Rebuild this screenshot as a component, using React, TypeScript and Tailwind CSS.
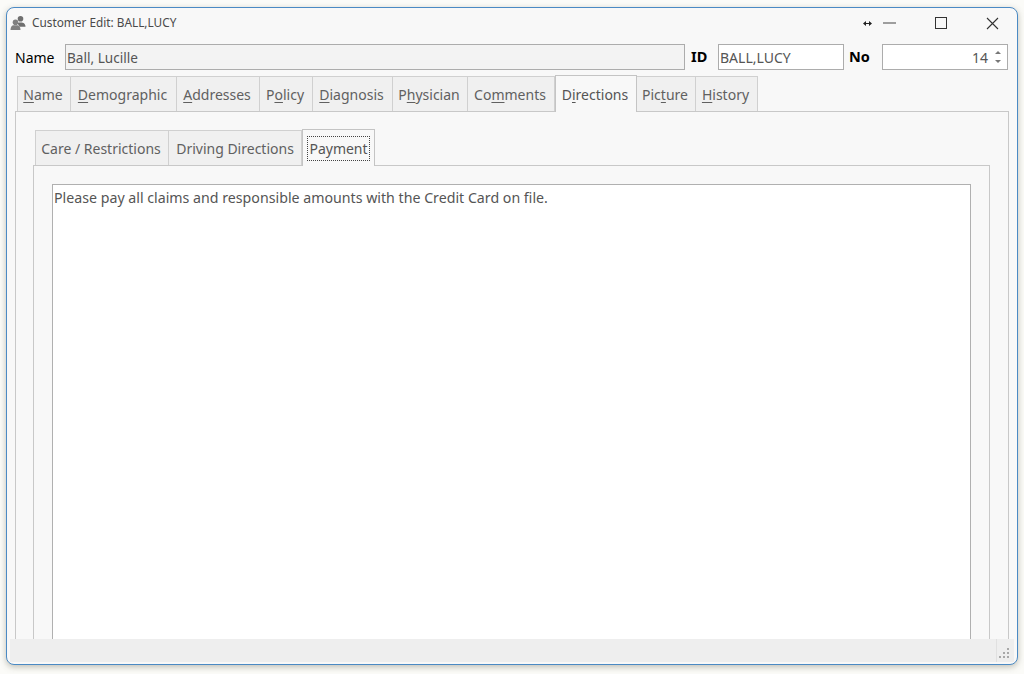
import React from 'react';

interface TabItem {
    before: string;
    mnemonic?: string;
    after?: string;
    width: number;
}

const MAIN_TABS: TabItem[] = [
    {before: '', mnemonic: 'N', after: 'ame', width: 54},
    {before: '', mnemonic: 'D', after: 'emographic', width: 106},
    {before: '', mnemonic: 'A', after: 'ddresses', width: 83},
    {before: 'P', mnemonic: 'o', after: 'licy', width: 53},
    {before: '', mnemonic: 'D', after: 'iagnosis', width: 80},
    {before: 'P', mnemonic: 'h', after: 'ysician', width: 75},
    {before: 'Co', mnemonic: 'm', after: 'ments', width: 87},
    {before: 'D', mnemonic: 'i', after: 'rections', width: 82},
    {before: 'Pic', mnemonic: 't', after: 'ure', width: 59},
    {before: '', mnemonic: 'H', after: 'istory', width: 62},
];

const ACTIVE_MAIN = 7;

function TabLabel({tab}: {tab: TabItem}) {
    return (
        <span>
            {tab.before}
            {tab.mnemonic && <span className="underline underline-offset-2">{tab.mnemonic}</span>}
            {tab.after}
        </span>
    );
}

function PeopleIcon() {
    return (
        <svg width="16" height="16" viewBox="0 0 16 16" fill="#6f6f6f">
            <circle cx="10.5" cy="3.8" r="2.8" />
            <path d="M7 8.5c1-1.2 6-1.2 7.2 0 .9.7 1.3 2 1.3 3.2H9.5c-.3-1.3-1.2-2.4-2.5-3.2z" />
            <circle cx="5.5" cy="7.3" r="2.8" fill="#808080" />
            <path d="M.5 15c0-3 1.4-4.8 3-4.8h4c1.6 0 3 1.8 3 4.8z" fill="#808080" />
        </svg>
    );
}

export default function App() {
    return (
        <div className="w-[1024px] h-[674px] overflow-hidden bg-[#fbfbf8] pl-[6px] pt-[7px] font-['Noto_Sans','Open_Sans',sans-serif]">
            <div className="w-[1012px] h-[658px] flex flex-col overflow-hidden rounded-lg border border-[#4b8ac4] bg-[#f8f8f8] shadow-[0_2px_6px_rgba(80,80,60,0.35)]">
                {/* title bar */}
                <div className="h-[29px] shrink-0 flex items-center pl-[3px] pt-[1px]">
                    <PeopleIcon />
                    <span className="ml-[6px] text-[11.8px] text-[#4a4a4a]">Customer Edit: BALL,LUCY</span>
                    <svg className="ml-auto" width="9" height="7" viewBox="0 0 9 7" fill="#222">
                        <path d="M0 3.5 3 1v2h3V1l3 2.5L6 6V4H3v2z" />
                    </svg>
                    <div className="w-[40px] pl-[11px]">
                        <svg className="block" width="13" height="2" viewBox="0 0 13 2" stroke="#444" strokeWidth="1">
                            <path d="M0 1h13" />
                        </svg>
                    </div>
                    <div className="w-[57px] flex justify-center">
                        <svg width="12" height="12" viewBox="0 0 12 12" fill="none" stroke="#333" strokeWidth="1">
                            <rect x="0.5" y="0.5" width="11" height="11" />
                        </svg>
                    </div>
                    <div className="w-[46px] mr-[2px] flex justify-center">
                        <svg width="13" height="13" viewBox="0 0 13 13" fill="none" stroke="#333" strokeWidth="1.1">
                            <path d="M1 1l11 11M12 1 1 12" />
                        </svg>
                    </div>
                </div>

                {/* name row */}
                <div className="h-[26px] mt-[7px] shrink-0 flex items-center text-[14px]">
                    <span className="ml-[8px] w-[50px] text-black">Name</span>
                    <div className="w-[620px] h-[26px] border border-[#acacac] bg-[#f3f3f3] px-[1px] leading-[25px] text-[13.6px] text-[#555]">
                        Ball, Lucille
                    </div>
                    <span className="ml-[6px] w-[27px] font-bold text-[14.5px] text-black">ID</span>
                    <div className="w-[126px] h-[26px] border border-[#acacac] bg-white px-[1px] leading-[25px] text-[#555]">
                        BALL,LUCY
                    </div>
                    <span className="ml-[5px] w-[33px] font-bold text-[14.5px] text-black">No</span>
                    <div className="w-[126px] h-[26px] border border-[#acacac] bg-white flex items-center justify-end text-[#555]">
                        <span>14</span>
                        <div className="w-[19px] flex flex-col items-center gap-[6px]">
                            <svg width="6" height="3" viewBox="0 0 6 3" fill="#777"><path d="M3 0 6 3H0z" /></svg>
                            <svg width="6" height="3" viewBox="0 0 6 3" fill="#777"><path d="M0 0h6L3 3z" /></svg>
                        </div>
                    </div>
                </div>

                {/* main tabs + pane */}
                <div className="ml-[8px] mr-[8px] mt-[5px] flex-1 min-h-0 flex flex-col">
                    <div className="h-[36px] shrink-0 flex items-end pl-[2px] text-[14px]">
                        {MAIN_TABS.map((tab, i) =>
                            i === ACTIVE_MAIN ? (
                                <div
                                    key={i}
                                    style={{width: tab.width}}
                                    className="h-[37px] -mb-[1px] pt-[1px] pr-[2px] z-10 shrink-0 flex items-center justify-center border border-b-0 border-[#c4c4c4] bg-[#f8f8f8] text-[#555]"
                                >
                                    <TabLabel tab={tab} />
                                </div>
                            ) : (
                                <div
                                    key={i}
                                    style={{width: tab.width}}
                                    className="h-[35px] pt-[1px] pr-[2px] shrink-0 flex items-center justify-center border border-l-0 first:border-l border-b-0 border-[#d0d0d0] bg-[#f0f0f0] text-[#606060]"
                                >
                                    <TabLabel tab={tab} />
                                </div>
                            ),
                        )}
                    </div>

                    <div className="flex-1 min-h-0 border-x border-t border-[#c8c8c8] pl-[17px] pr-[18px] pt-[17px] flex flex-col">
                        {/* sub tabs */}
                        <div className="h-[36px] shrink-0 flex items-end pl-[2px] text-[14px]">
                            <div className="w-[134px] h-[35px] pt-[1px] pr-[2px] flex items-center justify-center border border-b-0 border-[#d0d0d0] bg-[#f0f0f0] text-[#606060]">
                                Care / Restrictions
                            </div>
                            <div className="w-[133px] h-[35px] pt-[1px] flex items-center justify-center border border-l-0 border-b-0 border-[#d0d0d0] bg-[#f0f0f0] text-[#606060]">
                                Driving Directions
                            </div>
                            <div className="w-[73px] h-[37px] -mb-[1px] pt-[1px] z-10 flex items-center justify-center border border-b-0 border-[#c4c4c4] bg-[#f8f8f8] text-[#555]">
                                <span className="h-[25px] w-[63px] flex items-center justify-center border border-dotted border-[#444]">
                                    Payment
                                </span>
                            </div>
                        </div>

                        <div className="flex-1 min-h-0 border-x border-t border-[#c8c8c8] px-[18px] pt-[18px] flex flex-col">
                            <div className="flex-1 min-h-0 border-x border-t border-[#b0b0b0] bg-white px-[1px] pt-[2px] text-[14.2px] text-[#555]">
                                Please pay all claims and responsible amounts with the Credit Card on file.
                            </div>
                        </div>
                    </div>
                </div>

                {/* status bar */}
                <div className="h-[23px] mx-[3px] mb-[2px] shrink-0 bg-[#eeeeee] flex justify-end">
                    <div className="w-[18px] border-l border-[#e0e0e0] flex items-end justify-end pb-[3px] pr-[4px]">
                        <svg width="11" height="11" viewBox="0 0 11 11" fill="#a8a8a8">
                            <rect x="8" y="0" width="2" height="2" />
                            <rect x="4" y="4" width="2" height="2" />
                            <rect x="8" y="4" width="2" height="2" />
                            <rect x="0" y="8" width="2" height="2" />
                            <rect x="4" y="8" width="2" height="2" />
                            <rect x="8" y="8" width="2" height="2" />
                        </svg>
                    </div>
                </div>
            </div>
        </div>
    );
}
